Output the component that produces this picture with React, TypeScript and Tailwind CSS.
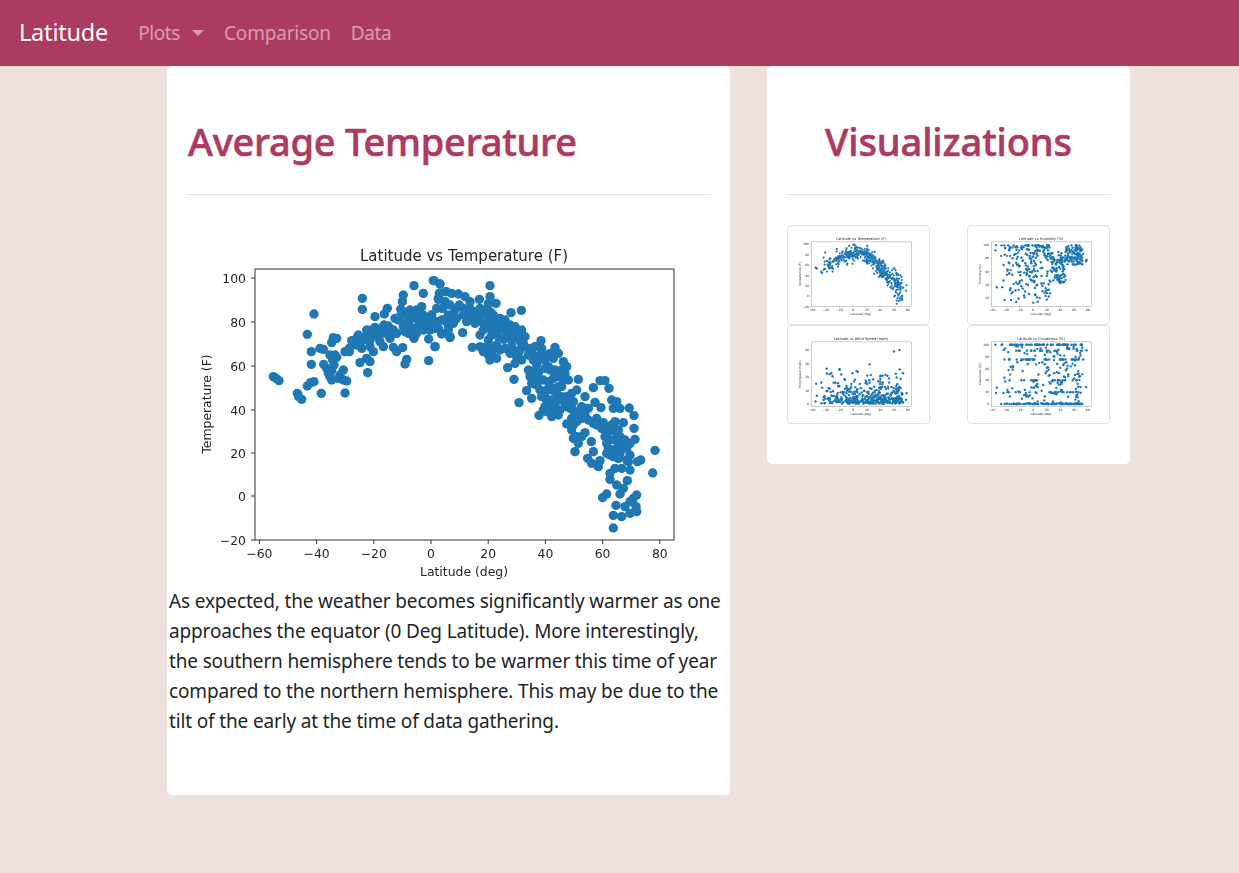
const L: number[][] = [[250,410],[258,415],[267,422],[322,460],[326,470],[335,478],[352,438],[362,428],[372,425],[394,460],[465,459],[352,283],[372,222],[364,335],[364,373],[390,325],[400,328],[401,373],[410,385],[415,400],[425,420],[420,410],[430,293],[440,295],[425,308],[420,345],[435,345],[428,360],[440,352],[432,375],[425,392],[445,415],[460,390],[450,405],[470,423],[460,420],[465,335],[478,335],[478,325],[485,302],[500,295],[510,310],[515,325],[530,270],[545,270],[525,290],[540,300],[520,300],[540,320],[550,335],[530,355],[510,368],[540,365],[533,398],[517,175],[517,208],[555,230],[583,222],[592,205],[582,255],[595,258],[590,280],[600,295],[575,280],[565,280],[550,290],[580,320],[570,305],[610,322],[620,335],[638,323],[650,358],[645,372],[615,235],[625,240],[640,165],[637,185],[632,208],[620,280],[640,260],[650,250],[665,265],[660,210],[680,210],[695,200],[700,225],[685,240],[672,295],[675,280],[700,160],[672,137],[690,250],[700,270],[720,270],[730,265],[715,240],[725,225],[740,245],[755,280],[780,290],[716,297],[735,320],[716,362],[732,122],[750,132],[768,155],[750,160],[745,175],[765,185],[757,205],[775,225],[775,260],[760,240],[640,215],[655,235],[610,270],[505,285],[555,262],[700,250],[680,262],[705,235],[690,225],[660,240],[715,255],[745,265],[770,245],[535,285],[560,275],[575,265],[510,295],[500,315],[650,225],[670,225],[630,230],[645,275],[655,280],[665,280],[680,280]];
const R: number[][] = [[10,122],[30,132],[48,155],[28,160],[25,178],[45,185],[38,205],[5,225],[15,320],[35,240],[50,245],[65,160],[85,162],[105,170],[120,185],[148,178],[180,137],[180,170],[198,190],[175,190],[88,195],[75,210],[60,230],[80,235],[100,225],[115,220],[130,215],[150,205],[165,210],[180,215],[243,218],[274,211],[130,235],[145,240],[160,250],[175,240],[195,245],[210,235],[225,240],[240,255],[255,260],[275,270],[285,290],[265,290],[245,300],[222,298],[210,265],[180,265],[150,285],[160,270],[35,282],[60,293],[98,278],[55,270],[15,265],[127,322],[150,320],[160,335],[175,345],[180,360],[200,355],[190,320],[175,300],[200,315],[210,330],[233,383],[252,418],[267,488],[240,340],[260,350],[255,370],[275,360],[295,325],[315,320],[333,302],[335,325],[350,345],[375,322],[385,340],[370,355],[355,380],[320,375],[295,390],[300,410],[325,400],[340,420],[320,435],[290,452],[305,475],[330,450],[370,415],[400,365],[410,380],[405,400],[415,420],[395,440],[380,460],[365,480],[350,490],[340,510],[327,526],[365,530],[375,500],[390,510],[410,470],[430,485],[445,418],[440,450],[465,470],[475,505],[495,487],[513,503],[490,443],[510,422],[525,422],[537,445],[545,480],[560,485],[550,505],[570,505],[598,504],[612,527],[612,565],[615,598],[580,548],[565,570],[545,555],[520,548],[500,535],[475,540],[445,520],[440,545],[420,505],[410,552],[425,570],[430,595],[465,578],[445,610],[435,635],[484,605],[490,635],[473,655],[485,670],[505,680],[510,662],[525,590],[530,610],[545,630],[550,650],[570,640],[585,600],[600,645],[595,665],[600,690],[575,685],[555,685],[540,700],[540,718],[560,735],[592,722],[580,745],[570,762],[530,762],[518,773],[558,796],[585,800],[600,785],[610,775],[620,765],[618,800],[620,815],[600,820],[575,830],[550,826],[550,864],[632,660],[622,665],[675,631],[668,699],[310,345],[325,360],[345,385],[305,395],[315,415],[360,440],[345,470],[360,500],[385,480],[425,460],[455,500],[530,575],[555,600],[570,610],[540,600],[300,340],[120,240],[140,222],[200,270],[230,280],[250,330],[270,330],[220,255],[150,225],[170,225],[190,225],[135,250],[120,205],[100,205],[215,250],[235,270],[255,285],[270,305],[185,285],[205,290],[170,320],[185,340],[245,320],[225,325],[265,340],[310,360],[330,345],[345,360],[360,340],[320,395],[310,430],[335,470],[350,450],[365,450],[385,440],[385,410],[395,390],[345,500],[370,520],[430,510],[455,535],[490,550],[515,565],[535,625],[560,625],[575,625],[590,625],[555,575],[520,560],[440,590],[455,590],[430,555],[420,480],[410,500],[590,660],[565,655],[540,645],[20,205],[60,195],[70,250],[110,245],[280,310],[295,345],[360,390],[375,390],[305,430],[330,420],[355,425],[400,420],[395,470],[405,490],[350,515],[385,525],[425,535],[465,525],[500,555],[535,575],[570,590],[600,610],[560,650],[530,640],[555,545],[575,600]];
const temp: number[][] = [...L.map(([x, y]) => [190 + x / 3, 240 + y / 3]), ...R.map(([x, y]) => [430 + x / 3, 240 + y / 3])];

function rng(seed: number) {
  let s = seed;
  return () => {
    s = (s * 1664525 + 1013904223) % 4294967296;
    return s / 4294967296;
  };
}

const r1 = rng(7);
const wind: number[][] = temp.map(([x]) => [x, 530 - 5.67 * Math.min(27, 0.4 + -Math.log(1 - r1() * 0.985) * 6.4)]);
wind.push([602, 309], [625, 303], [500, 363], [490, 410], [505, 408], [640, 400], [610, 402], [320, 381], [340, 400]);
const r2 = rng(19);
const humid: number[][] = temp.map(([x]) => {
  const lat = (x - 431) / 2.86;
  let v = 100 - Math.pow(r2(), 1.7) * 88;
  if (lat > 48) v = 70 + r2() * 30;
  else if (lat > 25) v = 42 + r2() * 48;
  return [x, 558 - 2.757 * v];
});
const r3 = rng(41);
const cl = [0, 0, 0, 0, 1, 1, 20, 40, 75, 75, 90, 100, 100, 100, 100];
const cloud: number[][] = temp.map(([x]) => {
  const u = r3();
  const v = u < 0.6 ? cl[Math.floor(r3() * cl.length)] : r3() * 100;
  return [x, 529 - 2.484 * v];
});

const xTicks = [-60, -40, -20, 0, 20, 40, 60, 80];
const mono = "'DejaVu Sans', sans-serif";

type ChartProps = {
  title: string;
  yLabel: string;
  pts: number[][];
  yTicks: number[][];
  viewBox: string;
  r: number;
  className: string;
};

function Chart({ title, yLabel, pts, yTicks, viewBox, r, className }: ChartProps) {
  return (
    <svg viewBox={viewBox} className={className}>
      <g fill="#1f77b4">
        {pts.map(([x, y], i) => (
          <circle key={i} cx={x} cy={y} r={r} />
        ))}
      </g>
      <rect x="255" y="269" width="419" height="271" fill="none" stroke="#333" strokeWidth="1" />
      <g fill="#262626" fontFamily={mono} fontSize="12.4" textAnchor="middle">
        {xTicks.map((t) => {
          const x = 431 + t * 2.86;
          return (
            <g key={t}>
              <line x1={x} x2={x} y1="540" y2="544" stroke="#333" />
              <text x={x} y="558">{t < 0 ? `\u2212${-t}` : t}</text>
            </g>
          );
        })}
        {yTicks.map(([t, y]) => (
          <g key={t}>
            <line x1="251" x2="255" y1={y} y2={y} stroke="#333" />
            <text x="246" y={y + 5} textAnchor="end">{t < 0 ? `\u2212${-t}` : t}</text>
          </g>
        ))}
        <text x="464" y="576" fontSize="12.4">Latitude (deg)</text>
        <text x="464" y="261" fontSize="15">{title}</text>
        <text x="211" y="404" fontSize="12.4" transform="rotate(-90 211 404)">{yLabel}</text>
      </g>
    </svg>
  );
}

const tempTicks = [[100, 278], [80, 322], [60, 366], [40, 410], [20, 453], [0, 496], [-20, 540]];
const windTicks = [0, 10, 20, 30, 40].map((v) => [v, 530 - 5.67 * v]);
const humidTicks = [20, 40, 60, 80, 100].map((v) => [v, 558 - 2.757 * v]);
const cloudTicks = [0, 20, 40, 60, 80, 100].map((v) => [v, 529 - 2.484 * v]);

function Thumb(p: { title: string; yLabel: string; pts: number[][]; yTicks: number[][]; r: number }) {
  return (
    <div className="h-[99.5px] w-[143px] rounded-[4px] border border-[#dee2e6] bg-white p-[4px]">
      <Chart {...p} viewBox="175 219 557 377" className="h-[90px] w-[133px] blur-[0.5px]" />
    </div>
  );
}

export default function App() {
  return (
    <div className="min-h-[873px] bg-[#eee2dc] font-['Noto_Sans',sans-serif]">
      <nav className="flex h-[66px] items-center bg-[#ac3b61] pl-[19px] text-[19px] text-white/50">
        <span className="mr-[30px] text-[23.5px] tracking-[-0.2px] text-white">Latitude</span>
        <span className="tracking-[-0.4px]">Plots</span>
        <span className="ml-[12px] mr-[20px] h-0 w-0 border-x-[6px] border-t-[6px] border-x-transparent border-t-white/50" />
        <span className="mr-[20px] tracking-[-0.2px]">Comparison</span>
        <span className="tracking-[-0.4px]">Data</span>
      </nav>
      <main className="flex items-start gap-[37px] pl-[167px]">
        <section className="h-[729px] w-[563px] rounded-[5px] bg-white">
          <div className="mx-[19px] h-[129px] border-b border-[#e3e3e3] pt-[46px]">
            <h1 className="pl-[2px] text-[38px] leading-[58px] font-medium tracking-[-0.25px] text-[#ac3b61] [-webkit-text-stroke:0.6px_#ac3b61]">Average Temperature</h1>
          </div>
          <Chart
            title="Latitude vs Temperature (F)"
            yLabel="Temperature (F)"
            pts={temp}
            yTicks={tempTicks}
            viewBox="186 240 525 345"
            r={4.7}
            className="mt-[45px] ml-[19px] h-[345px] w-[525px] blur-[0.5px]"
          />
          <p className="mt-[1px] pl-[2px] text-[19px] leading-[30px] tracking-[-0.15px] text-[#212529]">
            As expected, the weather becomes significantly warmer as one<br />
            approaches the equator (0 Deg Latitude). More interestingly,<br />
            the southern hemisphere tends to be warmer this time of year<br />
            compared to the northern hemisphere. This may be due to the<br />
            tilt of the early at the time of data gathering.
          </p>
        </section>
        <section className="h-[398px] w-[363px] rounded-[5px] bg-white">
          <div className="mx-[19px] h-[129px] border-b border-[#e3e3e3] pt-[46px] text-center">
            <h1 className="text-[38px] leading-[58px] font-medium tracking-[-0.1px] text-[#ac3b61] [-webkit-text-stroke:0.6px_#ac3b61]">Visualizations</h1>
          </div>
          <div className="mx-[20px] mt-[30px] grid grid-cols-[143px_143px] justify-between">
            <Thumb title="Latitude vs Temperature (F)" yLabel="Temperature (F)" pts={temp} yTicks={tempTicks} r={4.6} />
            <Thumb title="Latitude vs Humidity (%)" yLabel="Humidity (%)" pts={humid} yTicks={humidTicks} r={5} />
            <Thumb title="Latitude vs Wind Speed (mph)" yLabel="Wind Speed (mph)" pts={wind} yTicks={windTicks} r={5} />
            <Thumb title="Latitude vs Cloudiness (%)" yLabel="Cloudiness (%)" pts={cloud} yTicks={cloudTicks} r={5} />
          </div>
        </section>
      </main>
    </div>
  );
}
